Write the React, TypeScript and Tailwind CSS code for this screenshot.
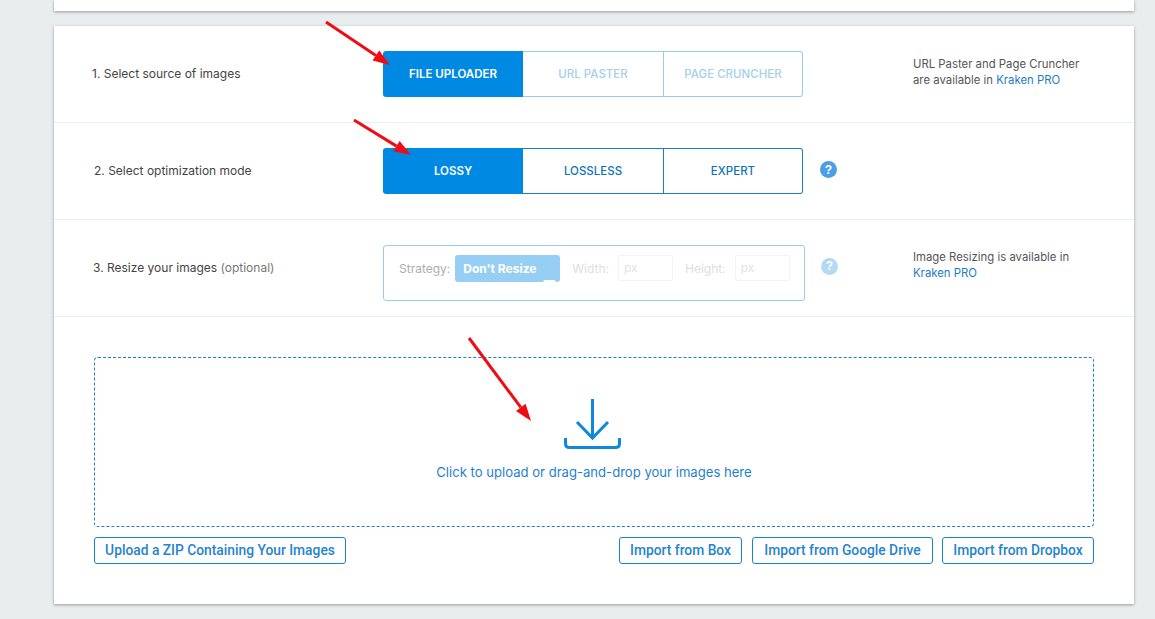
import React from "react";

const sans = "[font-family:'Open_Sans','Noto_Sans',sans-serif]";

function Segment({ items, muted, active }: { items: string[]; muted?: boolean; active: string }) {
  return (
    <div className="flex w-[420px] h-[46px] text-[11.5px] font-medium [font-family:Inter,sans-serif]">
      {items.map((t, i) => {
        const isActive = t === active;
        const width = i === 0 ? "w-[140px]" : i === 1 ? "w-[141px]" : "w-[139px]";
        const cls = isActive
          ? "bg-[#0089e3] text-white font-semibold rounded-l-[3px]"
          : muted
            ? `bg-white text-[#a6cfea] border-y border-r border-[#9ccbe6] ${i === items.length - 1 ? "rounded-r-[3px]" : ""}`
            : `bg-white text-[#1073b9] border-y border-r border-[#1a7fc1] ${i === items.length - 1 ? "rounded-r-[3px]" : ""}`;
        return (
          <div key={t} className={`flex items-center justify-center pt-[1px] ${width} ${cls}`}>
            {t}
          </div>
        );
      })}
    </div>
  );
}

function Help({ faded }: { faded?: boolean }) {
  return (
    <div
      className={`flex items-center justify-center w-[17px] h-[17px] rounded-full text-white text-[12px] font-bold [font-family:'Liberation_Sans',sans-serif] ${faded ? "bg-[#b5d8f3]" : "bg-[#4a9fe6]"}`}
    >
      ?
    </div>
  );
}

function Outline({ children, className = "" }: { children: React.ReactNode; className?: string }) {
  return (
    <button className={`flex items-center justify-center h-[27px] px-[10px] border border-[#1a84c9] rounded-[3px] bg-white text-[#2584cf] text-[13.8px] font-medium whitespace-nowrap [font-family:Roboto,sans-serif] ${className}`}>
      {children}
    </button>
  );
}

function Arrow({ x1, y1, x2, y2 }: { x1: number; y1: number; x2: number; y2: number }) {
  const a = Math.atan2(y2 - y1, x2 - x1);
  const len = 17;
  const w = 6;
  const bx = x2 - len * Math.cos(a);
  const by = y2 - len * Math.sin(a);
  const nx = -Math.sin(a) * w;
  const ny = Math.cos(a) * w;
  return (
    <g>
      <line x1={x1} y1={y1} x2={bx} y2={by} stroke="#ee0d13" strokeWidth={3} />
      <polygon points={`${x2},${y2} ${bx + nx},${by + ny} ${bx - nx},${by - ny}`} fill="#ee0d13" />
    </g>
  );
}

export default function App() {
  return (
    <div className={`relative w-[1155px] h-[619px] overflow-hidden bg-[#e9edee] ${sans}`}>
      <div className="ml-[54px] w-[1080px] h-[11px] bg-white shadow-[0_1px_3px_rgba(0,0,0,0.35)]" />
      <div className="ml-[54px] mt-[15px] w-[1080px] h-[578px] bg-white shadow-[0_1px_3px_rgba(0,0,0,0.35)]">
        <div className="flex items-center h-[97px] border-b border-[#eceff0] pl-[38px]">
          <div className="w-[291px] text-[12px] text-[#444] [font-family:Inter,sans-serif]">1. Select source of images</div>
          <Segment items={["FILE UPLOADER", "URL PASTER", "PAGE CRUNCHER"]} active="FILE UPLOADER" muted />
          <div className="ml-[110px] text-[11.35px] leading-[16px] text-[#555] [font-family:Inter,sans-serif] -mt-[5px]">
            URL Paster and Page Cruncher
            <br />
            are available in <span className="text-[#1a7cc7]">Kraken PRO</span>
          </div>
        </div>

        <div className="flex items-center h-[97px] border-b border-[#eceff0] pl-[40px]">
          <div className="w-[289px] text-[12px] text-[#444] [font-family:Inter,sans-serif]">2. Select optimization mode</div>
          <Segment items={["LOSSY", "LOSSLESS", "EXPERT"]} active="LOSSY" />
          <div className="ml-[17px] -mt-[3px]">
            <Help />
          </div>
        </div>

        <div className="flex items-center h-[97px] border-b border-[#eceff0] pl-[39px]">
          <div className="w-[290px] text-[12px] text-[#444] [font-family:Inter,sans-serif]">
            3. Resize your images <span className="text-[#777]">(optional)</span>
          </div>
          <div className="flex w-[422px] h-[56px] mt-[10px] pt-[9px] pl-[15px] border border-[#9ccbe6] rounded-[3px] text-[12px] [font-family:Inter,sans-serif]">
            <span className="h-[27px] leading-[27px] text-[#aeaeae]">Strategy:</span>
            <div className="relative ml-[5px] w-[105px] h-[27px] leading-[27px] pl-[8px] rounded-[3px] bg-[#97cff4] text-white font-bold overflow-hidden">
              Don&apos;t Resize
              <span className="absolute right-[4px] -bottom-[3px] w-[13px] h-[5px] rounded-full bg-white" />
            </div>
            <span className="ml-[12px] h-[27px] leading-[27px] text-[#dedede]">Width:</span>
            <div className="ml-[9px] w-[55px] h-[26px] leading-[24px] pl-[5px] border border-[#f3f3f3] text-[#e3e3e3] rounded-[2px]">px</div>
            <span className="ml-[12px] h-[27px] leading-[27px] text-[#dedede]">Height:</span>
            <div className="ml-[9px] w-[55px] h-[26px] leading-[24px] pl-[5px] border border-[#f3f3f3] text-[#e3e3e3] rounded-[2px]">px</div>
          </div>
          <div className="ml-[16px] -mt-[4px]">
            <Help faded />
          </div>
          <div className="ml-[75px] text-[11.35px] leading-[16px] text-[#555] [font-family:Inter,sans-serif] -mt-[6px]">
            Image Resizing is available in
            <br />
            <span className="text-[#1a7cc7]">Kraken PRO</span>
          </div>
        </div>

        <div className="px-[40px] pt-[40px]">
          <div className="flex flex-col items-center h-[170px] pt-[41px] border border-dashed border-[#1a84b9] rounded-[4px]">
            <svg className="mr-[3px]" width="57" height="50" viewBox="0 0 57 50" fill="none" stroke="#0f87da" strokeWidth="3">
              <path d="M28.500 0V39" />
              <path d="M13 23L28.500 39L44 23" />
              <path d="M1.500 39V44.500Q1.500 48.500 5.500 48.500H51.500Q55.500 48.500 55.500 44.500V39" />
            </svg>
            <div className="mt-[14px] text-[13.1px] text-[#1f7fcf] [font-family:Inter,sans-serif]">
              Click to upload or drag-and-drop your images here
            </div>
          </div>
          <div className="flex justify-between mt-[10px]">
            <Outline className="w-[252px]">Upload a ZIP Containing Your Images</Outline>
            <div className="flex">
              <Outline className="w-[123px]">Import from Box</Outline>
              <Outline className="w-[181px] ml-[10px]">Import from Google Drive</Outline>
              <Outline className="w-[152px] ml-[9px]">Import from Dropbox</Outline>
            </div>
          </div>
        </div>
      </div>

      <svg className="absolute inset-0 pointer-events-none" width="1155" height="619">
        <Arrow x1={326} y1={22} x2={390} y2={65} />
        <Arrow x1={354} y1={120} x2={411} y2={155} />
        <Arrow x1={469} y1={338} x2={531} y2={421} />
      </svg>
    </div>
  );
}
